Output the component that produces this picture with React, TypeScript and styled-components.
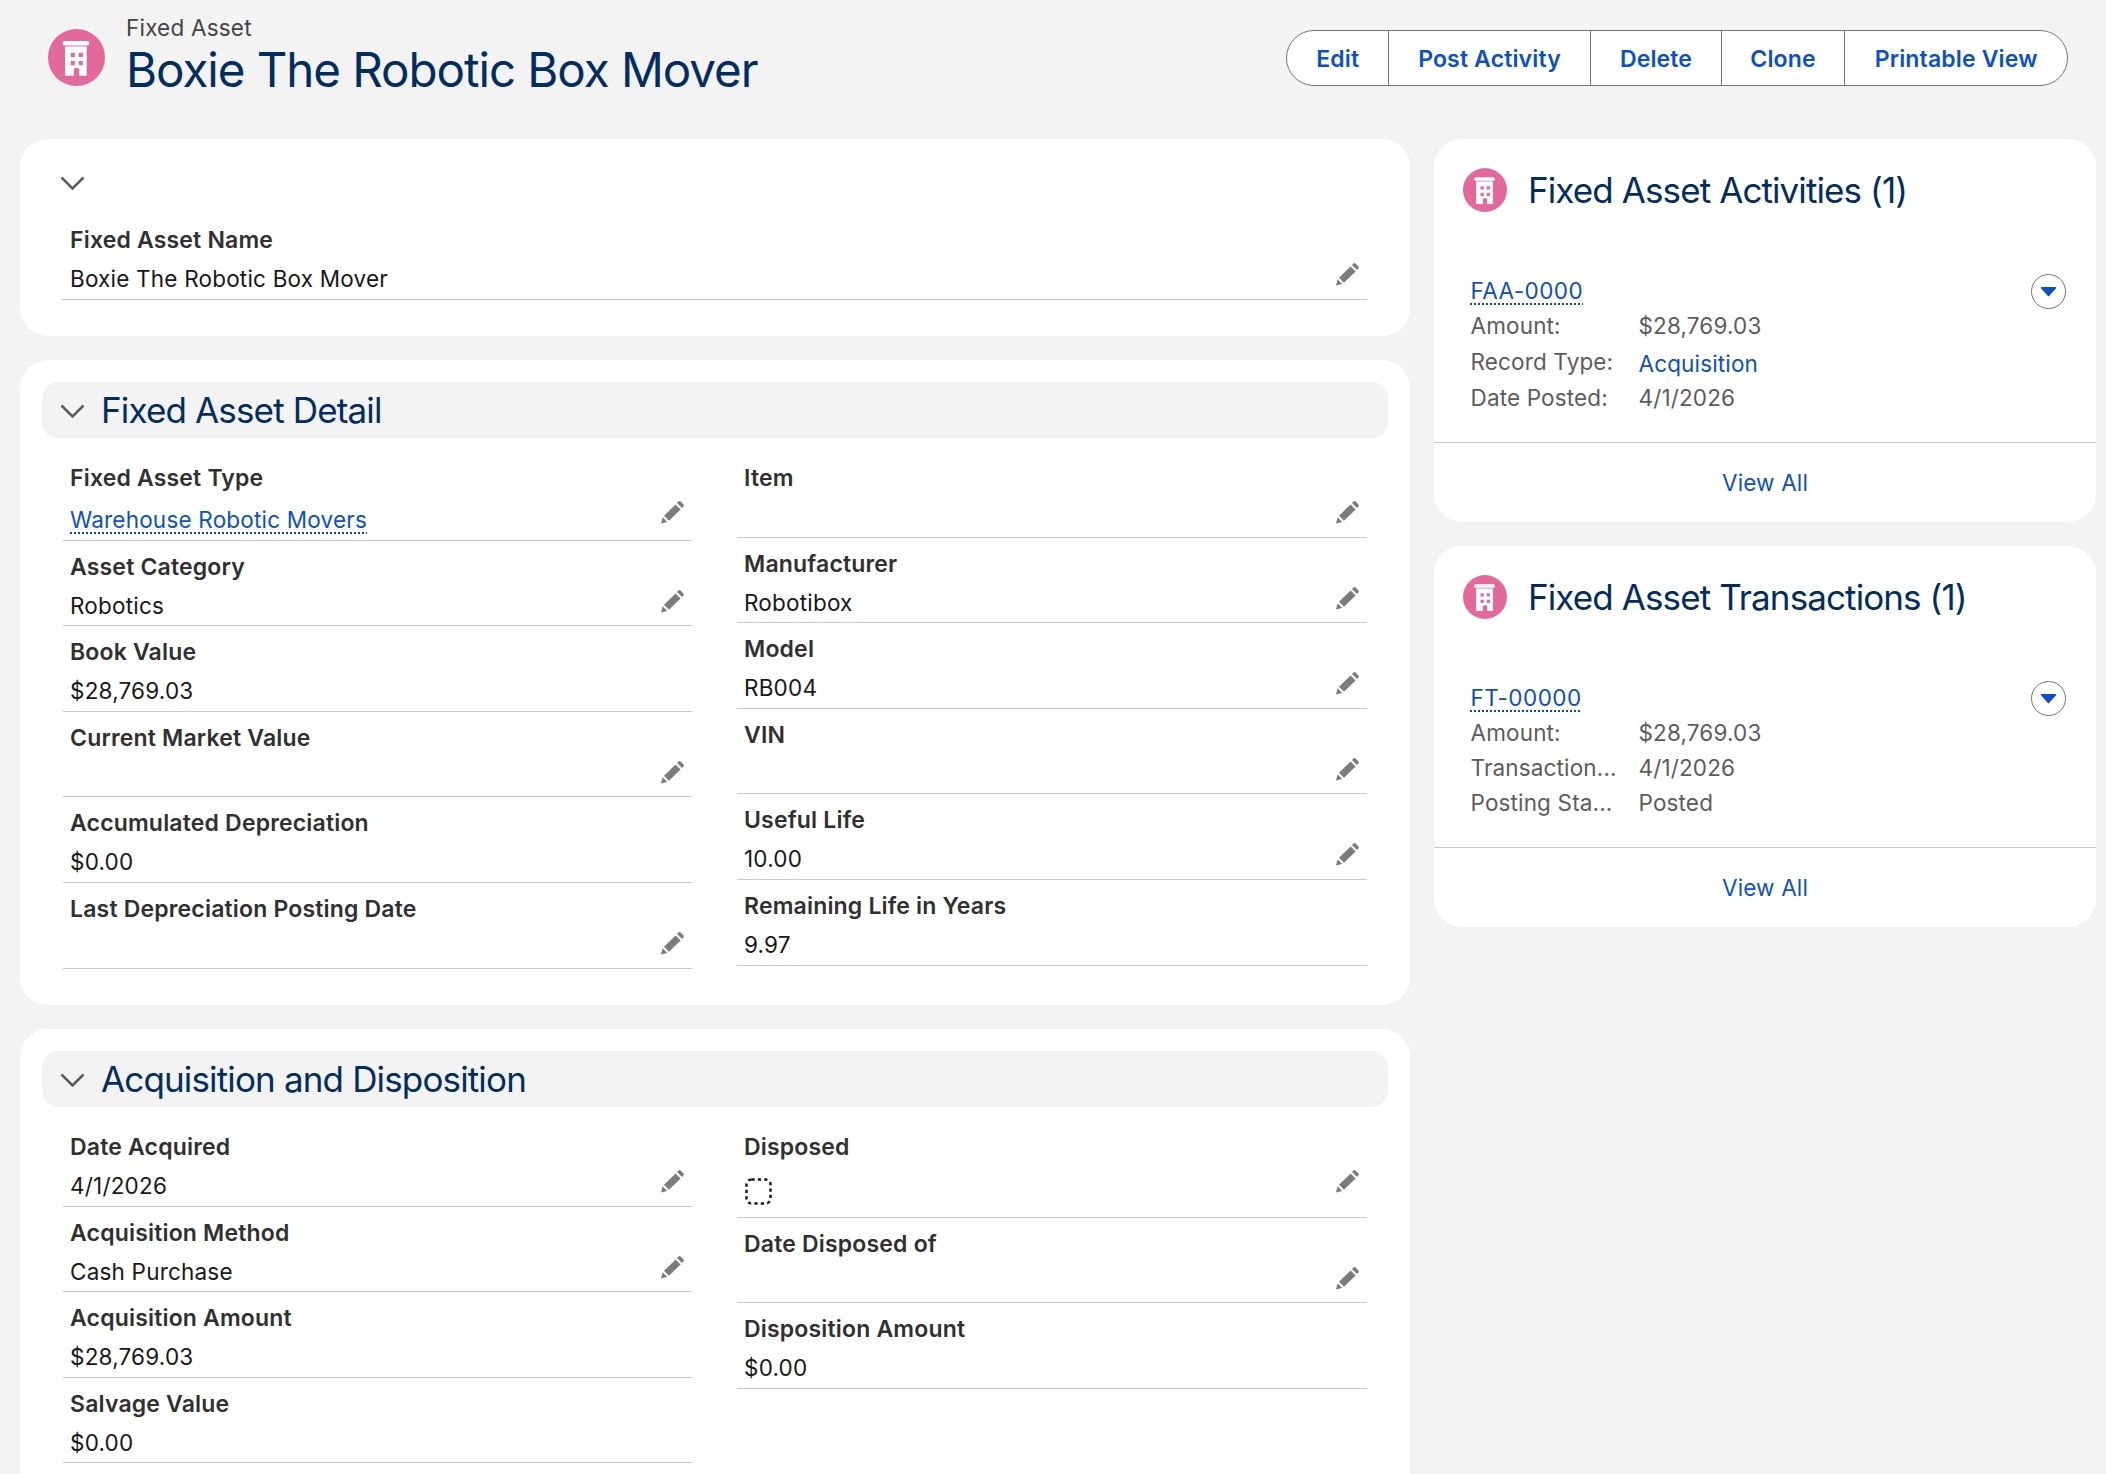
import React from 'react';
import styled, { createGlobalStyle } from 'styled-components';

type FieldData = {
  label: string;
  value?: string;
  link?: boolean;
  editable?: boolean;
  checkbox?: boolean;
};

const detailLeft: FieldData[] = [
  { label: 'Fixed Asset Type', value: 'Warehouse Robotic Movers', link: true, editable: true },
  { label: 'Asset Category', value: 'Robotics', editable: true },
  { label: 'Book Value', value: '$28,769.03' },
  { label: 'Current Market Value', editable: true },
  { label: 'Accumulated Depreciation', value: '$0.00' },
  { label: 'Last Depreciation Posting Date', editable: true },
];

const detailRight: FieldData[] = [
  { label: 'Item', editable: true },
  { label: 'Manufacturer', value: 'Robotibox', editable: true },
  { label: 'Model', value: 'RB004', editable: true },
  { label: 'VIN', editable: true },
  { label: 'Useful Life', value: '10.00', editable: true },
  { label: 'Remaining Life in Years', value: '9.97' },
];

const acquisitionLeft: FieldData[] = [
  { label: 'Date Acquired', value: '4/1/2026', editable: true },
  { label: 'Acquisition Method', value: 'Cash Purchase', editable: true },
  { label: 'Acquisition Amount', value: '$28,769.03' },
  { label: 'Salvage Value', value: '$0.00' },
];

const acquisitionRight: FieldData[] = [
  { label: 'Disposed', checkbox: true, editable: true },
  { label: 'Date Disposed of', editable: true },
  { label: 'Disposition Amount', value: '$0.00' },
];

const actions = [
  { label: 'Edit', width: 100.7 },
  { label: 'Post Activity', width: 202 },
  { label: 'Delete', width: 131 },
  { label: 'Clone', width: 123 },
  { label: 'Printable View', width: 223.3 },
];

const GlobalStyle = createGlobalStyle`
  html, body {
    margin: 0;
    padding: 0;
    background: #f3f3f3;
  }
  body {
    font-family: Inter, "Noto Sans", "Liberation Sans", sans-serif;
    overflow: hidden;
  }
`;

const Page = styled.div`
  height: 1474px;
  overflow: hidden;
  background: #f3f3f3;
`;

const PageHeader = styled.header`
  display: flex;
  justify-content: space-between;
  height: 139px;
  padding: 0 37.7px 0 48px;
  box-sizing: border-box;
`;

const TitleGroup = styled.div`
  display: flex;
  gap: 21px;
  padding-top: 29px;
`;

const TitleText = styled.div`
  margin-top: -15px;
`;

const ObjectName = styled.div`
  font-size: 22.5px;
  line-height: 27px;
  color: #444;
  letter-spacing: 0.2px;
`;

const RecordName = styled.h1`
  margin: 0;
  font-size: 47.5px;
  line-height: 58px;
  font-weight: 400;
  color: #032d60;
  letter-spacing: -1.05px;
  white-space: nowrap;
`;

const ButtonGroup = styled.div`
  display: flex;
  align-self: flex-start;
  margin-top: 30px;
  height: 56px;
  box-sizing: border-box;
  background: #fff;
  border: 1.3px solid #747474;
  border-radius: 28px;
  overflow: hidden;
`;

const ActionButton = styled.button<{ $width: number }>`
  width: ${(p) => p.$width}px;
  padding: 2px 0 0;
  border: 0;
  border-left: 1.3px solid #747474;
  background: transparent;
  font-family: inherit;
  font-size: 23px;
  font-weight: 600;
  letter-spacing: 0.15px;
  color: #0b50c8;

  &:first-child {
    border-left: 0;
  }
`;

const Columns = styled.main`
  display: grid;
  grid-template-columns: 1390px 662px;
  gap: 24px;
  padding-left: 20px;
  align-items: start;
`;

const Stack = styled.div`
  display: flex;
  flex-direction: column;
  gap: 24px;
`;

const Card = styled.section`
  background: #fff;
  border-radius: 28px;
  overflow: hidden;
`;

const LeftCard = styled(Card)`
  padding: 22px 22px 36.4px;
`;

const CollapseRow = styled.div`
  height: 53px;
  padding: 13px 0 0 18px;
  box-sizing: border-box;
`;

const SectionBar = styled.div`
  display: flex;
  align-items: center;
  gap: 16px;
  height: 56px;
  padding-left: 18px;
  margin-bottom: 14px;
  background: #f3f3f3;
  border-radius: 16px;
`;

const SectionTitle = styled.h2`
  margin: 0;
  font-size: 35px;
  font-weight: 400;
  color: #032d60;
  letter-spacing: -0.85px;
`;

const FieldGrid = styled.div`
  display: grid;
  grid-template-columns: 629px 630px;
  gap: 45px;
  padding-left: 21px;
`;

const FieldColumn = styled.div`
  display: flex;
  flex-direction: column;
`;

const FieldRow = styled.div`
  padding: 11px 8px 2.6px 7px;
  border-bottom: 1px solid #c9c9c9;
`;

const SingleField = styled.div`
  width: 1305px;
  margin-left: 20px;

  ${FieldRow} {
    padding-left: 8px;
  }
`;

const FieldLabel = styled.div`
  font-size: 23px;
  line-height: 30px;
  font-weight: 600;
  color: #303030;
  letter-spacing: 0.18px;
  margin-bottom: 7px;
`;

const ValueRow = styled.div<{ $check?: boolean }>`
  display: flex;
  justify-content: space-between;
  align-items: flex-start;
  min-height: ${(p) => (p.$check ? 45.2 : 34)}px;
`;

const FieldValue = styled.span`
  font-size: 22.5px;
  line-height: 34px;
  color: #181818;
  letter-spacing: 0.2px;
`;

const RecordLink = styled.a`
  font-size: 22.5px;
  line-height: 34px;
  color: #0b50c8;
  letter-spacing: 0.2px;
  text-decoration: underline dotted #0b4a9e 2px;
  text-underline-offset: 5px;
`;

const FieldLink = styled(RecordLink)`
  margin-top: 3px;
`;

const TileLink = styled(RecordLink)`
  letter-spacing: 0.45px;
`;

const EditIcon = styled.svg`
  flex: none;
  width: 25px;
  height: 24px;
  margin-right: -1px;
`;

const CheckboxIcon = styled.svg`
  flex: none;
  width: 27px;
  height: 27px;
  margin: 9px 0 0 1px;
`;

const RelatedHead = styled.div`
  display: flex;
  align-items: center;
  gap: 21px;
  padding: 29px 0 0 29px;
`;

const RelatedTitle = styled.h2`
  margin: 0;
  font-size: 35px;
  line-height: 44px;
  font-weight: 400;
  color: #032d60;
  letter-spacing: -0.9px;
`;

const Tile = styled.div`
  margin-top: 61px;
  padding: 0 30px 27px 36.5px;
  border-bottom: 1px solid #c9c9c9;
`;

const TileTitle = styled.div`
  display: flex;
  justify-content: space-between;
  align-items: center;
  height: 35px;
`;

const MenuButton = styled.span`
  display: flex;
  align-items: center;
  justify-content: center;
  width: 35px;
  height: 35px;
  margin-top: 1px;
  box-sizing: border-box;
  border: 1.3px solid #747474;
  border-radius: 50%;
`;

const DetailRow = styled.div<{ $tall?: boolean }>`
  display: grid;
  grid-template-columns: 168px 1fr;
  height: ${(p) => (p.$tall ? 37 : 35)}px;
  align-items: center;
  font-size: 22.5px;
  letter-spacing: 0.15px;
  color: #5c5c5c;
`;

const DetailLabel = styled.span`
  white-space: nowrap;
`;

const DetailLink = styled.a`
  color: #0b50c8;
  padding-top: 3px;
`;

const TileFooter = styled.div`
  display: flex;
  align-items: center;
  justify-content: center;
  height: 79px;
  font-size: 22.5px;
  letter-spacing: 0.15px;
  color: #0b50c8;
`;

const ObjectIcon = ({ size }: { size: number }) => (
  <svg width={size} height={size} viewBox="0 0 57 57" style={{ flex: 'none' }}>
    <circle cx="28.5" cy="28.5" r="28.5" fill="#e3699d" />
    <rect x="14.7" y="12" width="26.6" height="4.6" rx="2" fill="#fff" />
    <path
      fillRule="evenodd"
      fill="#fff"
      d="M17 17.5h21.7v29.2h-7.4v-6a1.6 1.6 0 0 0-1.6-1.6h-2.4a1.6 1.6 0 0 0-1.6 1.6v6H17z M22.7 23.7v4.2h4.2v-4.2z M30.7 23.7v4.2h4.2v-4.2z M22.7 32v4.2h4.2V32z M30.7 32v4.2h4.2V32z"
    />
  </svg>
);

const Chevron = () => (
  <svg width="25" height="14" viewBox="0 0 25 14" style={{ flex: 'none', display: 'block', marginTop: 2 }}>
    <path d="M1.5 1.5l11 11 11-11" fill="none" stroke="#5c5c5c" strokeWidth="2.5" />
  </svg>
);

const Pencil = () => (
  <EditIcon viewBox="0 0 25 24">
    <g fill="#7c7c7c">
      <path d="M1 23.5l1.6-6.2 4.6 4.6z" />
      <path d="M4 15.8L15.6 4.4l5 5L9 20.8z" />
      <path d="M17 3l1.4-1.4a1.6 1.6 0 0 1 2.2 0l2.8 2.8a1.6 1.6 0 0 1 0 2.2L22 8z" />
    </g>
  </EditIcon>
);

const Checkbox = () => (
  <CheckboxIcon viewBox="0 0 27 27">
    <rect x="1.5" y="1.5" width="24" height="24" rx="5" fill="none" stroke="#181818" strokeWidth="2.5" strokeDasharray="3.2 3.2" />
  </CheckboxIcon>
);

const Field = ({ label, value, link, editable, checkbox }: FieldData) => (
  <FieldRow>
    <FieldLabel>{label}</FieldLabel>
    <ValueRow $check={checkbox}>
      {checkbox ? (
        <Checkbox />
      ) : link ? (
        <FieldLink>{value}</FieldLink>
      ) : (
        <FieldValue>{value}</FieldValue>
      )}
      {editable && <Pencil />}
    </ValueRow>
  </FieldRow>
);

const FieldSection = ({ title, left, right }: { title: string; left: FieldData[]; right: FieldData[] }) => (
  <LeftCard>
    <SectionBar>
      <Chevron />
      <SectionTitle>{title}</SectionTitle>
    </SectionBar>
    <FieldGrid>
      <FieldColumn>
        {left.map((f) => (
          <Field key={f.label} {...f} />
        ))}
      </FieldColumn>
      <FieldColumn>
        {right.map((f) => (
          <Field key={f.label} {...f} />
        ))}
      </FieldColumn>
    </FieldGrid>
  </LeftCard>
);

const RelatedCard = ({
  title,
  record,
  rows,
}: {
  title: string;
  record: string;
  rows: { label: string; value: string; link?: boolean }[];
}) => (
  <Card>
    <RelatedHead>
      <ObjectIcon size={44} />
      <RelatedTitle>{title}</RelatedTitle>
    </RelatedHead>
    <Tile>
      <TileTitle>
        <TileLink>{record}</TileLink>
        <MenuButton>
          <svg width="17" height="11" viewBox="0 0 17 11">
            <path d="M1.5 1h14a.8.8 0 0 1 .6 1.3l-7 7.6a.8.8 0 0 1-1.2 0L.9 2.3A.8.8 0 0 1 1.5 1z" fill="#0b50c8" />
          </svg>
        </MenuButton>
      </TileTitle>
      {rows.map((r) => (
        <DetailRow key={r.label} $tall={r.link}>
          <DetailLabel>{r.label}</DetailLabel>
          {r.link ? <DetailLink>{r.value}</DetailLink> : <span>{r.value}</span>}
        </DetailRow>
      ))}
    </Tile>
    <TileFooter>View All</TileFooter>
  </Card>
);

const App: React.FC = () => (
  <Page>
    <GlobalStyle />
    <PageHeader>
      <TitleGroup>
        <ObjectIcon size={57} />
        <TitleText>
          <ObjectName>Fixed Asset</ObjectName>
          <RecordName>Boxie The Robotic Box Mover</RecordName>
        </TitleText>
      </TitleGroup>
      <ButtonGroup>
        {actions.map((a) => (
          <ActionButton key={a.label} $width={a.width}>
            {a.label}
          </ActionButton>
        ))}
      </ButtonGroup>
    </PageHeader>
    <Columns>
      <Stack>
        <LeftCard>
          <CollapseRow>
            <Chevron />
          </CollapseRow>
          <SingleField>
            <Field label="Fixed Asset Name" value="Boxie The Robotic Box Mover" editable />
          </SingleField>
        </LeftCard>
        <FieldSection title="Fixed Asset Detail" left={detailLeft} right={detailRight} />
        <FieldSection title="Acquisition and Disposition" left={acquisitionLeft} right={acquisitionRight} />
      </Stack>
      <Stack>
        <RelatedCard
          title="Fixed Asset Activities (1)"
          record="FAA-0000"
          rows={[
            { label: 'Amount:', value: '$28,769.03' },
            { label: 'Record Type:', value: 'Acquisition', link: true },
            { label: 'Date Posted:', value: '4/1/2026' },
          ]}
        />
        <RelatedCard
          title="Fixed Asset Transactions (1)"
          record="FT-00000"
          rows={[
            { label: 'Amount:', value: '$28,769.03' },
            { label: 'Transaction...', value: '4/1/2026' },
            { label: 'Posting Sta...', value: 'Posted' },
          ]}
        />
      </Stack>
    </Columns>
  </Page>
);

export default App;
